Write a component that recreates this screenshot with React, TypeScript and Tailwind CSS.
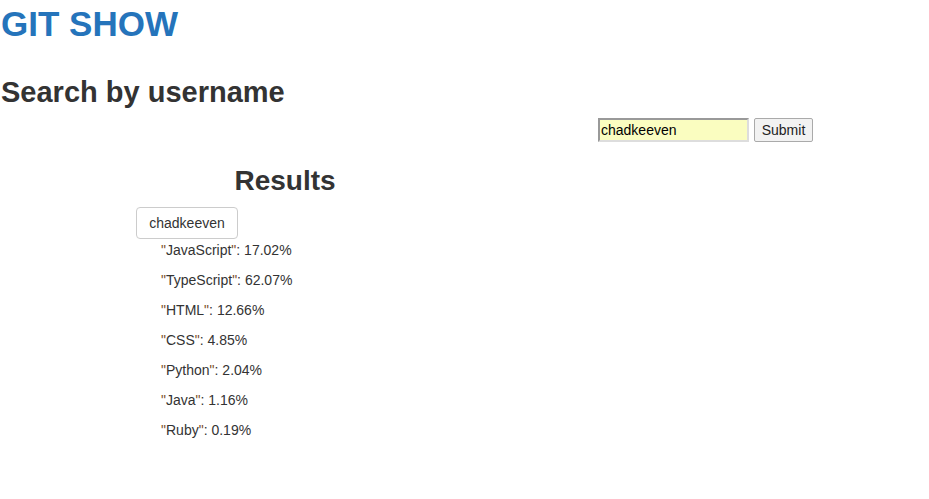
import { useState } from 'react';

const languages: [string, string][] = [
  ['JavaScript', '17.02%'],
  ['TypeScript', '62.07%'],
  ['HTML', '12.66%'],
  ['CSS', '4.85%'],
  ['Python', '2.04%'],
  ['Java', '1.16%'],
  ['Ruby', '0.19%'],
];

export default function App() {
  const [username, setUsername] = useState('chadkeeven');

  return (
    <div className="min-h-screen bg-white text-[#333] font-['Liberation_Sans',Arial,sans-serif]">
      <h1 className="pt-[5px] pl-[1px] text-[35px] leading-[1.1] font-bold text-[#2574bb]">GIT SHOW</h1>

      <h2 className="mt-[33px] pl-[1px] text-[29px] leading-[1.1] font-bold">Search by username</h2>

      {/* Search form */}
      <form className="mt-[10px] flex items-center gap-[5px] pl-[598px]" onSubmit={(e) => e.preventDefault()}>
        <input
          value={username}
          onChange={(e) => setUsername(e.target.value)}
          className="h-[24px] w-[151px] border-2 border-t-[#999] border-l-[#999] border-r-[#ddd] border-b-[#ddd] bg-[#fafdc0] px-[1px] text-[14px] text-black outline-none"
        />
        <button
          type="submit"
          className="h-[24px] w-[59px] rounded-[2px] border border-[#aaa] bg-[#f2f2f2] text-[14px] text-[#222]"
        >
          Submit
        </button>
      </form>

      {/* Results */}
      <div className="ml-[136px] mt-[24px] w-[298px]">
        <h2 className="text-center text-[28px] leading-[1.1] font-bold">Results</h2>
        <button className="mt-[10px] h-[32px] w-[102px] rounded-[4px] border border-[#ccc] bg-white text-[14px] text-[#333]">
          chadkeeven
        </button>
        <ul className="mt-[1px] pl-[25px]">
          {languages.map(([name, pct]) => (
            <li key={name} className="mb-[10px] text-[14px] leading-[20px]">
              <span className="text-[#7a4f2c]">"</span>
              {name}
              <span className="text-[#7a4f2c]">"</span>: {pct}
            </li>
          ))}
        </ul>
      </div>
    </div>
  );
}
